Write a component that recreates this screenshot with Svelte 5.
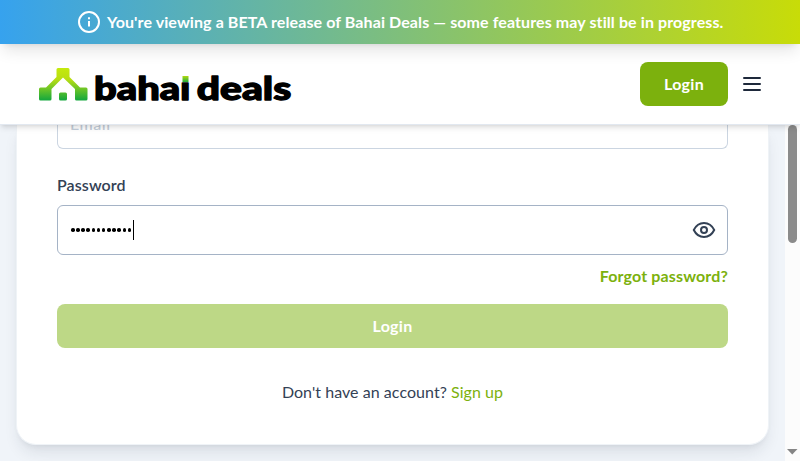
<script>
  let email = $state('');
  const maskedLength = 12;
</script>

<div class="app">
  <div class="banner">
    <svg class="info" viewBox="0 0 24 24" width="24" height="24" fill="none" stroke="#fff" stroke-width="2">
      <circle cx="12" cy="12" r="10" />
      <path d="M12 11v5.500M12 7.300v2" />
    </svg>
    <span class="notice">You're viewing a BETA release of Bahai Deals — some features may still be in progress.</span>
  </div>

  <header>
    <svg class="logo" width="256" height="48" viewBox="0 -4 256 48" aria-label="bahai deals">
      <defs>
        <linearGradient id="roof" gradientUnits="userSpaceOnUse" x1="0" y1="4" x2="0" y2="36">
          <stop offset="0" stop-color="#c4ea0c" />
          <stop offset=".35" stop-color="#b9de12" />
          <stop offset="1" stop-color="#16a83d" />
        </linearGradient>
        <linearGradient id="dot" x1="0" y1="0" x2="0" y2="1">
          <stop offset="0" stop-color="#b4d810" />
          <stop offset="1" stop-color="#20ad3b" />
        </linearGradient>
      </defs>
      <path fill="url(#roof)" d="M20 4h10q1.500 0 1.500 1.500V13L42 23.500h6q1.500 0 1.500 1.500v10q0 1.500-1.500 1.500h-9.500Q37 36.500 37 35V25L25 13.500 13.500 25v10q0 1.500-1.500 1.500H2.500Q1 36.500 1 35V25q0-1.500 1.500-1.500H8L18.500 13V5.500Q18.500 4 20 4Z" />
      <rect x="21" y="28.500" width="8" height="8" rx="1.500" fill="url(#roof)" />
      <text x="56" y="36.300" textLength="96.500" lengthAdjust="spacingAndGlyphs">bahaı</text>
      <text x="158.800" y="36.300" textLength="94.500" lengthAdjust="spacingAndGlyphs">deals</text>
      <rect x="144.500" y="12" width="6" height="6" fill="url(#dot)" />
    </svg>
    <div class="actions">
      <button class="login">Login</button>
      <svg class="menu" width="24" height="24" viewBox="0 0 24 24" stroke="#1e293b" stroke-width="2" stroke-linecap="round">
        <path d="M4 6h16M4 12h16M4 18h16" />
      </svg>
    </div>
  </header>

  <div class="scroller">
    <main>
      <section class="card">
        <div class="field email"><span>{email || 'Email'}</span></div>
        <div class="label">Password</div>
        <div class="field password">
          <div class="dots">
            {#each Array(maskedLength) as _}<i></i>{/each}
            <b class="caret"></b>
          </div>
          <svg width="24" height="24" viewBox="0 0 24 24" fill="none" stroke="#334155" stroke-width="2">
            <path d="M1.800 12C4 7.500 7.600 5 12 5s8 2.500 10.200 7C20 16.500 16.400 19 12 19s-8-2.500-10.200-7Z" />
            <circle cx="12" cy="12" r="3" />
          </svg>
        </div>
        <div class="forgot"><span>Forgot password?</span></div>
        <button class="submit" disabled>Login</button>
        <p class="signup"><span>Don't have an account?</span> <a href="#signup">Sign up</a></p>
      </section>
    </main>
    <div class="scrollbar">
      <div class="thumb"></div>
      <svg width="11" height="6" viewBox="0 0 11 6"><path d="M0 0h10.500L5.250 5.500Z" fill="#858585" /></svg>
    </div>
  </div>
</div>

<style>
  .app {
    width: 800px;
    height: 461px;
    display: flex;
    flex-direction: column;
    overflow: hidden;
    font: 500 16px/24px Lato, 'Liberation Sans', sans-serif;
    color: #334155;
    background: #f0f4f9;
  }
  .banner {
    position: relative;
    z-index: 3;
    height: 44px;
    flex: none;
    display: flex;
    align-items: center;
    padding-left: 77px;
    gap: 6px;
    box-sizing: border-box;
    color: #fff;
    background: linear-gradient(90deg, #36a2ee, #c8dc08);
    box-shadow: 0 10px 15px -3px rgba(0, 0, 0, .1), 0 4px 6px -4px rgba(0, 0, 0, .1);
  }
  .notice {
    font-weight: 700;
    white-space: nowrap;
    letter-spacing: .1px;
  }
  header {
    position: relative;
    z-index: 2;
    height: 81px;
    flex: none;
    box-sizing: border-box;
    display: flex;
    align-items: center;
    justify-content: space-between;
    padding: 0 36px 0 38px;
    background: #fff;
    border-bottom: 1px solid #e2e8f0;
    box-shadow: 0 4px 6px -1px rgba(0, 0, 0, .1), 0 2px 4px -2px rgba(0, 0, 0, .1);
  }
  .logo {
    overflow: visible;
  }
  .logo text {
    font: 900 32px Lato, sans-serif;
    fill: #000;
    stroke: #000;
    stroke-width: 1.300px;
    stroke-linejoin: round;
  }
  .actions {
    display: flex;
    align-items: center;
    gap: 12px;
  }
  button {
    font: 700 16px/24px Lato, sans-serif;
    letter-spacing: .3px;
    color: #fff;
    border: 0;
    padding: 0;
    height: 44px;
    border-radius: 8px;
  }
  .login {
    width: 88px;
    background: #7cb10d;
  }
  .scroller {
    flex: 1;
    min-height: 0;
    display: flex;
  }
  main {
    flex: 1;
    padding: 0 16px 16px;
  }
  .card {
    height: 320px;
    box-sizing: border-box;
    padding: 0 40px;
    background: #fff;
    border: 1px solid #eff3f7;
    border-top: 0;
    border-radius: 0 0 20px 20px;
    box-shadow: 0 10px 15px -3px rgba(30, 41, 59, .1), 0 4px 6px -4px rgba(30, 41, 59, .1);
  }
  .field {
    box-sizing: border-box;
    border: 1px solid #cbd5e1;
    border-radius: 6px;
    padding: 0 11px 0 12px;
  }
  .email {
    height: 24px;
    border-top: 0;
    border-radius: 0 0 6px 6px;
    color: #c3cdd9;
  }
  .email span {
    display: block;
    margin-top: 0;
    position: relative;
    top: -13px;
    letter-spacing: .5px;
  }
  .label {
    margin: 24px 0 8px;
    height: 24px;
    font-weight: 600;
    letter-spacing: .1px;
  }
  .password {
    height: 50px;
    border-color: #a5b3c6;
    display: flex;
    align-items: center;
    justify-content: space-between;
  }
  .dots {
    display: flex;
    align-items: center;
    height: 20px;
    padding-left: 1px;
  }
  .dots i {
    width: 3.500px;
    height: 3.500px;
    margin-right: 1.670px;
    border-radius: 50%;
    background: #000;
  }
  .caret {
    width: 1px;
    height: 20px;
    background: #000;
  }
  .forgot {
    margin: 9px 0 16px;
    height: 24px;
    text-align: right;
    font-weight: 700;
    color: #7cb10d;
    letter-spacing: .15px;
  }
  .submit {
    display: block;
    width: 100%;
    background: #bdd886;
  }
  .signup {
    margin: 32px 0 0;
    text-align: center;
    font-weight: 400;
    letter-spacing: .05px;
  }
  a {
    color: #7cb10d;
    text-decoration: none;
  }
  .scrollbar {
    width: 15px;
    box-sizing: border-box;
    padding-bottom: 6px;
    background: #fcfcfc;
    display: flex;
    flex-direction: column;
    align-items: center;
    justify-content: space-between;
  }
  .thumb {
    width: 9px;
    height: 118px;
    border-radius: 5px;
    background: #8b8b8b;
  }
</style>
